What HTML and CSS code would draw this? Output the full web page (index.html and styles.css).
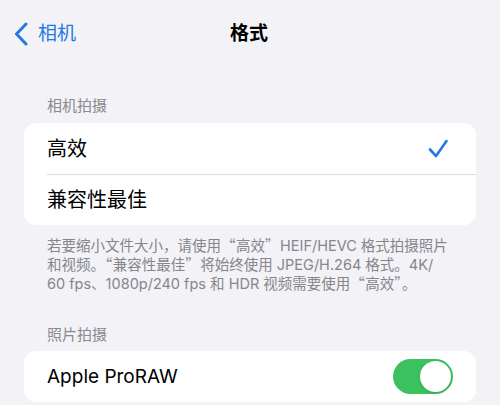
FILE: index.html
```html
<!DOCTYPE html>
<html lang="zh-CN">
<head>
<meta charset="utf-8">
<link rel="stylesheet" href="styles.css">
</head>
<body>
<div class="screen">
  <header class="nav">
    <div class="back">
      <svg class="chev" width="14" height="24" viewBox="0 0 14 24"><path d="M12 2 L2.5 12 L12 22" fill="none" stroke="#2479e3" stroke-width="3" stroke-linecap="round" stroke-linejoin="round"/></svg>
      <span class="back-label">相机</span>
    </div>
    <div class="title">格式</div>
  </header>

  <div class="group first">
    <div class="group-header">相机拍摄</div>
    <div class="card">
      <div class="row">
        <span class="label">高效</span>
        <svg class="check" width="20" height="20" viewBox="0 0 20 20"><path d="M2 10.5 L8 17 L18.5 2" fill="none" stroke="#2479e3" stroke-width="2.6" stroke-linecap="round" stroke-linejoin="round"/></svg>
      </div>
      <div class="row">
        <span class="label">兼容性最佳</span>
      </div>
    </div>
    <div class="group-footer">
      <div class="fline">若要缩小文件大小，请使用<span class="q">“</span>高效<span class="q">”</span>HEIF/HEVC 格式拍摄照片</div>
      <div class="fline">和视频。<span class="q">“</span>兼容性最佳<span class="q">”</span>将始终使用 JPEG/H.264 格式。4K/</div>
      <div class="fline">60 fps、1080p/240 fps 和 HDR 视频需要使用<span class="q">“</span>高效<span class="q">”</span>。</div>
    </div>
  </div>

  <div class="group second">
    <div class="group-header">照片拍摄</div>
    <div class="card">
      <div class="row">
        <span class="label latin">Apple ProRAW</span>
        <div class="toggle"><div class="knob"></div></div>
      </div>
    </div>
  </div>
</div>
</body>
</html>
```

FILE: styles.css
```css
* { box-sizing: border-box; }
html, body {
  margin: 0;
  padding: 0;
  background: #f2f2f7;
}
body {
  font-family: Inter, "Noto Sans CJK SC", "Noto Sans", sans-serif;
  color: #000;
  width: 500px;
  height: 405px;
  overflow: hidden;
}
.screen {
  padding: 0 24px;
}
.nav {
  height: 68px;
  display: flex;
  align-items: center;
  justify-content: center;
  position: relative;
}
.back {
  position: absolute;
  left: -10px;
  top: 0;
  height: 68px;
  display: flex;
  align-items: center;
  gap: 10px;
  color: #2479e3;
}
.chev { display: block; }
.back-label {
  font-size: 19px;
  line-height: 24px;
}
.title {
  font-size: 19px;
  font-weight: 700;
  line-height: 24px;
  margin-left: -2px;
}
.group.first { padding-top: 28px; }
.group.second { padding-top: 33px; }
.group-header {
  font-size: 15px;
  line-height: 20px;
  color: #8a8a8e;
  padding-left: 23px;
  margin-bottom: 7px;
}
.second .group-header { margin-bottom: 6px; }
.card {
  background: #fff;
  border-radius: 12px;
  overflow: hidden;
}
.row {
  height: 51px;
  display: flex;
  align-items: center;
  justify-content: space-between;
  margin-left: 23px;
  padding-right: 24px;
}
.row + .row {
  border-top: 1px solid #dcdce0;
}
.label {
  font-size: 20px;
  line-height: 26px;
}
.label.latin {
  font-size: 19px;
}
.check {
  display: block;
  margin-right: 4px;
}
.group-footer {
  font-size: 14.5px;
  color: #86868b;
  padding: 10px 0 0 23px;
  white-space: nowrap;
}
.fline {
  height: 19px;
  line-height: 19px;
  overflow: visible;
}
.q {
  font-family: "Noto Sans CJK SC", sans-serif;
  margin-right: 0.5px;
}
.toggle {
  width: 60px;
  height: 35px;
  border-radius: 18px;
  background: #3bc15e;
  display: flex;
  align-items: center;
  justify-content: flex-end;
  padding-right: 2px;
  margin-right: -1px;
}
.knob {
  width: 31px;
  height: 31px;
  border-radius: 50%;
  background: #fff;
  box-shadow: 0 1px 3px rgba(0,0,0,0.15);
}
```
